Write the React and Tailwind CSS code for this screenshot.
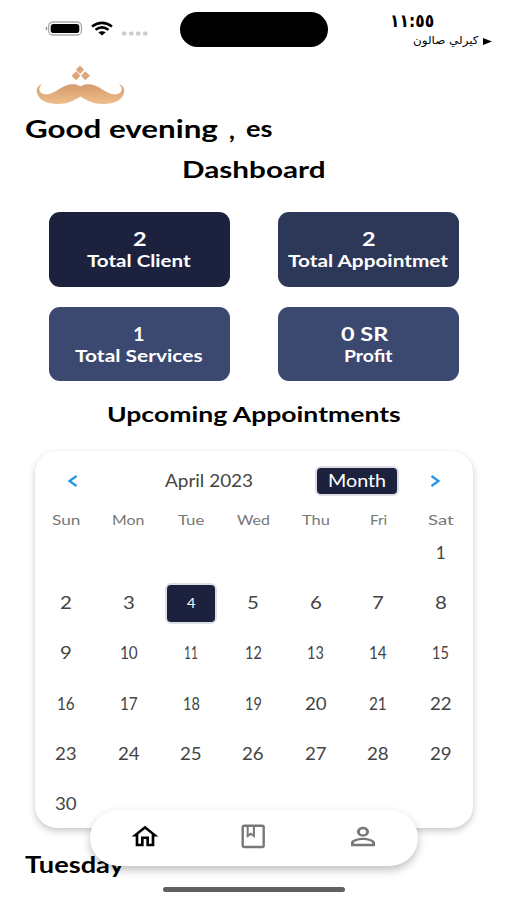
import { useLayoutEffect, useRef, useState } from "react";

// A line of text stretched horizontally to a set width.
function Fit({ w, className = "", children, dir }) {
  const ref = useRef(null);
  const [scale, setScale] = useState(1);
  useLayoutEffect(() => {
    setScale(w / ref.current.offsetWidth);
  }, [w]);
  return (
    <span className="block shrink-0" style={{ width: w }}>
      <span
        ref={ref}
        dir={dir}
        className={`block w-max origin-left whitespace-nowrap ${className}`}
        style={{ transform: `scaleX(${scale})` }}
      >
        {children}
      </span>
    </span>
  );
}

const cards = [
  ["2", 13, "Total Client", 104, "bg-[#1c223d]", "pr-0"],
  ["2", 13, "Total Appointmet", 160, "bg-[#2d3758]", "pr-0"],
  ["1", 11, "Total Services", 128, "bg-[#3b4870]", "pr-[2px]"],
  ["0 SR", 47, "Profit", 49, "bg-[#3b4870]", "pr-[7px]"],
];

const weekdays = [["Sun", 28], ["Mon", 33], ["Tue", 26], ["Wed", 33], ["Thu", 28], ["Fri", 17], ["Sat", 26]];

const narrow = { 1: 10, 10: 18, 11: 14, 12: 17, 13: 17, 14: 18, 15: 17, 16: 18, 17: 18, 18: 17, 19: 17, 21: 18 };
const dayWidth = (d) => narrow[d] || (d < 10 ? 12 : 22);

function Day({ n }) {
  if (n < 1) return <div />;
  if (n === 4)
    return (
      <div className="flex items-center justify-center">
        <div className="flex h-[41px] w-[52px] items-center justify-center rounded-[6px] border-2 border-[#dcdfe7] bg-[#1c223d] text-white">
          <Fit w={9} className="text-[13px] leading-4">4</Fit>
        </div>
      </div>
    );
  return (
    <div className="flex items-center justify-center text-[#444]">
      <Fit w={dayWidth(n)} className="text-[17px] leading-5">{n}</Fit>
    </div>
  );
}

export default function App() {
  return (
    <div className="relative flex h-[900px] w-[507px] flex-col overflow-hidden bg-white font-['Lato',sans-serif] text-black">
      <header className="flex h-[60px] shrink-0 items-start">
        <div className="flex w-[180px] shrink-0 pl-[44px] pt-[20px]">
          <svg width="105" height="18" viewBox="0 0 105 18">
            <path d="M3 6.500Q0 8.500 3 10.500z" fill="#888" />
            <rect x="4.500" y="2" width="33" height="13" rx="4.500" fill="#fff" stroke="#aaa" strokeWidth="1.300" />
            <rect x="6.700" y="4" width="28.600" height="9" rx="2.800" fill="#000" />
            <g fill="none" stroke="#000" strokeWidth="2.600">
              <path d="M48 6.500Q58 -.8 68 6.500" />
              <path d="M51.500 9.800Q58 5 64.500 9.800" />
            </g>
            <path d="M54.300 12.300Q58 10 61.700 12.300L58 15.500z" fill="#000" />
            <g fill="#ccc">
              <rect x="78" y="11.500" width="4.500" height="4" rx="1.500" />
              <rect x="85" y="11.500" width="4.500" height="4" rx="1.500" />
              <rect x="92" y="11.500" width="4.500" height="4" rx="1.500" />
              <rect x="99" y="11.500" width="4.500" height="4" rx="1.500" />
            </g>
          </svg>
        </div>
        <div className="mt-[12px] h-[35px] w-[148px] shrink-0 rounded-full bg-black" />
        <div className="w-[179px] pt-[10px]">
          <div className="pl-[62px] font-['DejaVu_Sans',sans-serif]">
            <Fit w={44} className="text-[18px] font-bold leading-[22px]">١١:٥٥</Fit>
          </div>
          <div className="flex items-center gap-[5px] pl-[85px] pt-px font-['DejaVu_Sans',sans-serif]">
            <Fit w={65} dir="rtl" className="text-[11px] leading-4">كيرلي صالون</Fit>
            <svg width="9" height="7" viewBox="0 0 9 7"><path d="M0 0L9 3.500L0 7z" /></svg>
          </div>
        </div>
      </header>

      <div className="flex h-[50px] shrink-0 pl-[36px] pt-[5px]">
        <svg width="90" height="41" viewBox="0 0 90 41">
          <defs>
            <linearGradient id="gold" x1="0" y1="0" x2="0" y2="1">
              <stop offset="0" stopColor="#d59b6d" />
              <stop offset="1" stopColor="#efbd8b" />
            </linearGradient>
          </defs>
          <g fill="#dda67b">
            <path d="M44 .500L48.200 4.700L44 8.900L39.800 4.700z" />
            <path d="M40.200 6.200L44.400 10.700L40.200 15.200L35.500 10.700z" />
            <path d="M49.300 6.200L54 10.700L49.300 15.200L45 10.700z" />
          </g>
          <path
            fill="url(#gold)"
            d="M6.500 19C2.500 20 .6 23 .8 26.500C1.500 34 9 38.800 22 39C32 39 38 35.500 44.500 31.500C51 35.500 57 39 67 39C80 38.800 87.500 34 88.200 26.500C88.400 23 86.500 20 82.500 19C86.500 21.500 87 26 83 28.500C72 33 65 19.300 53 19.200C49 19.200 47 19.800 44.500 21.500C42 19.800 40 19.200 36 19.200C24 19.300 17 33 6 28.500C2 26 2.500 21.500 6.500 19z"
          />
        </svg>
      </div>

      <div className="flex h-[38px] shrink-0 items-center pl-[25px] font-bold">
        <Fit w={193} className="text-[25px] leading-[34px] -mt-0.5">Good evening</Fit>
        <span className="ml-[11px] w-[17px] text-[25px] leading-8">,</span>
        <Fit w={26} className="text-[22px] leading-8">es</Fit>
      </div>
      <h1 className="flex h-[44px] shrink-0 items-center justify-center font-bold">
        <Fit w={143} className="text-[22px] leading-7">Dashboard</Fit>
      </h1>

      <section className="mx-auto mt-[20px] grid w-[410px] shrink-0 grid-cols-[181px_181px] justify-between gap-y-5 text-white">
        {cards.map(([value, vw, label, lw, color, nudge]) => (
          <div key={label} className={`flex h-[74.500px] flex-col items-center justify-center rounded-[11px] pt-[2px] font-bold ${color}`}>
            <div className={nudge}><Fit w={vw} className="text-[18px] leading-[21px]">{value}</Fit></div>
            <Fit w={lw} className="text-[17px] leading-[21px]">{label}</Fit>
          </div>
        ))}
      </section>

      <h2 className="mt-[18px] flex h-[30px] shrink-0 items-center justify-center font-bold">
        <Fit w={294} className="text-[21.500px] leading-7">Upcoming Appointments</Fit>
      </h2>

      <section className="ml-[35px] mt-[22px] h-[377px] w-[438px] shrink-0 rounded-[22px] bg-white shadow-[0_3px_7px_rgba(0,0,0,0.22)]">
        <div className="flex h-[60px] items-center">
          <svg className="ml-[32px]" width="11" height="12" viewBox="0 0 11 12" fill="none" stroke="#2196e8" strokeWidth="2.200"><path d="M9.500 1L2.500 6L9.500 11" /></svg>
          <div className="ml-[87px] text-[#444]"><Fit w={88} className="text-[17px] leading-5">April 2023</Fit></div>
          <div className="ml-[62px] flex h-[30px] w-[84px] items-center justify-center rounded-[6px] border-2 border-[#dcdde5] bg-[#1c223d] text-white">
            <Fit w={58} className="text-[17px] leading-5">Month</Fit>
          </div>
          <svg className="ml-[31px]" width="11" height="12" viewBox="0 0 11 12" fill="none" stroke="#2196e8" strokeWidth="2.200"><path d="M1.500 1L8.500 6L1.500 11" /></svg>
        </div>
        <div className="grid w-[437px] grid-cols-7">
          {weekdays.map(([d, w]) => (
            <div key={d} className="flex h-[17px] items-center justify-center text-[#777]">
              <Fit w={w} className="text-[13.500px] leading-4">{d}</Fit>
            </div>
          ))}
        </div>
        <div className="grid w-[437px] auto-rows-[50.200px] grid-cols-7">
          {Array.from({ length: 36 }, (_, i) => <Day key={i} n={i - 5} />)}
        </div>
      </section>

      <div className="mt-[23px] pl-[25px] font-bold">
        <Fit w={99} className="text-[22px] leading-7">Tuesday</Fit>
      </div>

      <nav className="absolute left-[90px] top-[810px] flex h-[56px] w-[328px] items-center justify-between rounded-full bg-white pl-[39px] pr-[37px] shadow-[0_4px_9px_rgba(0,0,0,0.25)]">
        <svg className="-mt-1" width="32" height="29" viewBox="0 0 24 24" preserveAspectRatio="none">
          <path d="M12 5.690l5 4.500V18h-2v-6H9v6H7v-7.810l5-4.500M12 3L2 12h3v8h6v-6h2v6h6v-8h3L12 3z" />
        </svg>
        <svg className="-mt-1" width="26" height="26" viewBox="0 0 26 26" fill="none" stroke="#777" strokeWidth="2.400">
          <rect x="2.700" y="2.700" width="21" height="21.300" rx="1.500" />
          <path d="M7.700 3V13L10.800 10.800L13.900 13V3" strokeWidth="2" />
        </svg>
        <svg className="-mt-1" width="36" height="29" viewBox="0 0 24 24" preserveAspectRatio="none" fill="#777">
          <path d="M12 5.900a2.100 2.100 0 1 1 0 4.200 2.100 2.100 0 0 1 0-4.200m0 9c2.970 0 6.100 1.460 6.100 2.100v1.100H5.900V17c0-.64 3.130-2.100 6.100-2.100M12 4C9.790 4 8 5.790 8 8s1.790 4 4 4 4-1.790 4-4-1.790-4-4-4zm0 9c-2.670 0-8 1.340-8 4v3h16v-3c0-2.660-5.330-4-8-4z" />
        </svg>
      </nav>
      <div className="absolute left-[163px] top-[887px] h-[5px] w-[182px] rounded-full bg-[#606060]" />
    </div>
  );
}
